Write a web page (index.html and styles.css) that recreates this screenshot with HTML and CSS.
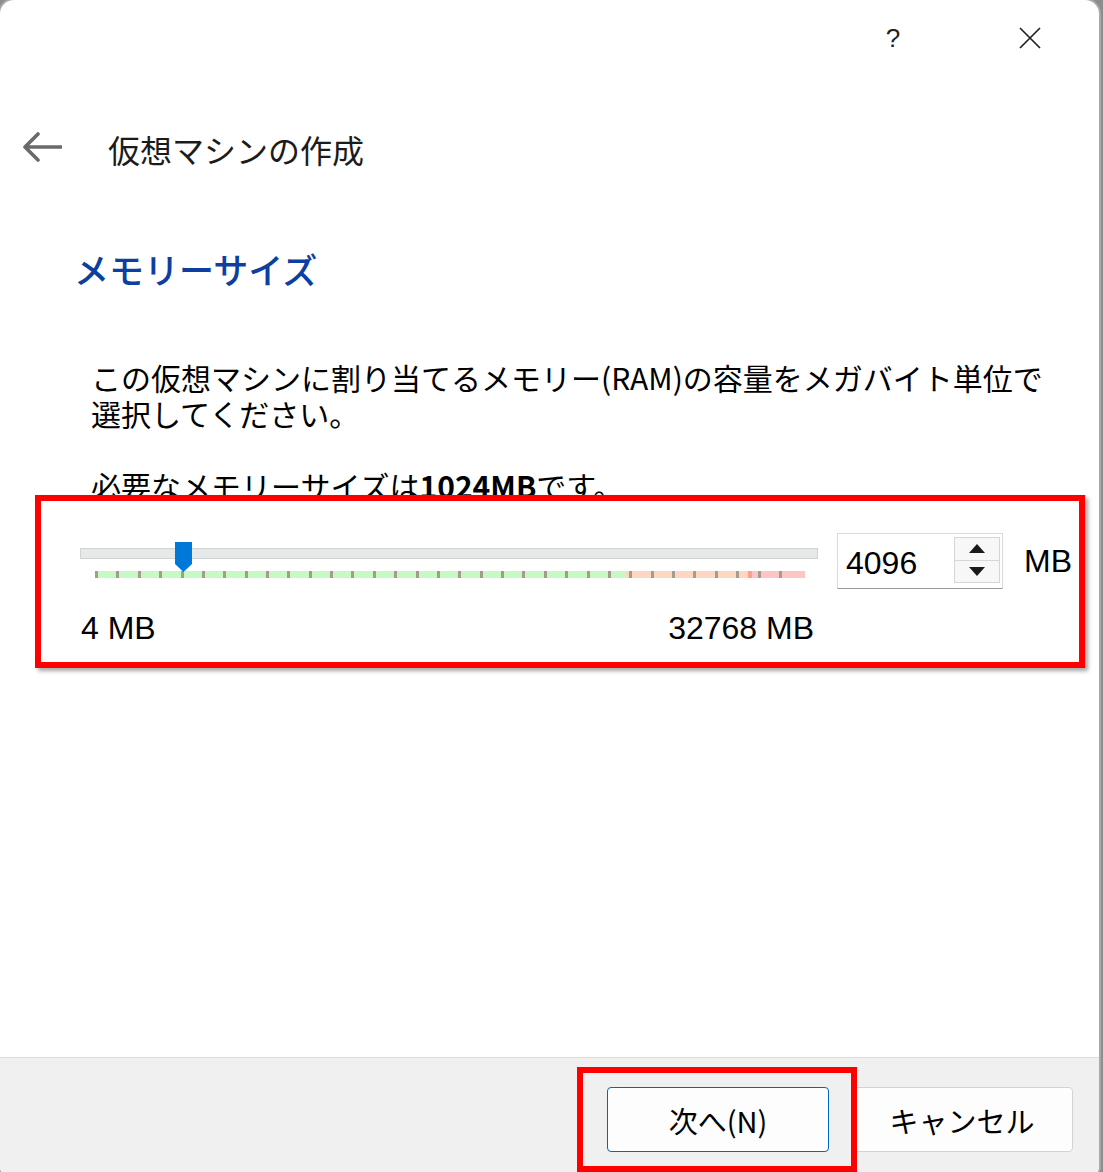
FILE: index.html
```html
<!DOCTYPE html>
<html lang="ja">
<head>
    <meta charset="UTF-8">
    <meta name="viewport" content="width=device-width, initial-scale=1.0">
    <title>仮想マシンの作成</title>
    <link rel="stylesheet" href="styles.css">
</head>
<body>
    <div class="dialog">
        <div class="titlebar">
            <span class="tb-btn help">?</span>
            <span class="tb-btn close">
                <svg width="22" height="22" viewBox="0 0 22 22"><path d="M1 1 L21 21 M21 1 L1 21" stroke="#222" stroke-width="1.7" fill="none"/></svg>
            </span>
        </div>

        <div class="header">
            <svg class="back" width="40" height="32" viewBox="0 0 40 32">
                <path d="M3 16 H39 M16 3 L3 16 L16 29" stroke="#6a6a6a" stroke-width="3.6" fill="none" stroke-linecap="round" stroke-linejoin="round"/>
            </svg>
            <span class="header-title">仮想マシンの作成</span>
        </div>

        <div class="content">
            <h2 class="page-title">メモリーサイズ</h2>
            <p class="desc">この仮想マシンに割り当てるメモリー(RAM)の容量をメガバイト単位で<br>選択してください。</p>
            <p class="note">必要なメモリーサイズは<b>1024MB</b>です。</p>

            <div class="highlight memory-box">
                <div class="memory-row">
                    <div class="slider">
                        <div class="track"></div>
                        <div class="thumb"></div>
                        <div class="scale"></div>
                        <div class="range-labels">
                            <span>4 MB</span>
                            <span>32768 MB</span>
                        </div>
                    </div>
                    <div class="spinbox">
                        <span class="spin-value">4096</span>
                        <div class="spin-buttons">
                            <span class="spin up"></span>
                            <span class="spin down"></span>
                        </div>
                    </div>
                    <span class="unit">MB</span>
                </div>
            </div>
        </div>

        <div class="footer">
            <button class="btn btn-default">次へ(N)</button>
            <button class="btn">キャンセル</button>
            <div class="highlight next-mark"></div>
        </div>
    </div>
</body>
</html>
```

FILE: styles.css
```css
body {
    margin: 0;
    background-color: #8d8d8d;
    font-family: "Noto Sans CJK JP", "Noto Sans", sans-serif;
    color: #000;
    overflow: hidden;
}
.dialog {
    width: 1099px;
    height: 1180px;
    background-color: #fff;
    border-radius: 14px;
    box-shadow: 0 0 0 2px #a9a9a9;
    display: flex;
    flex-direction: column;
    overflow: hidden;
}
.titlebar {
    height: 76px;
    display: flex;
    justify-content: flex-end;
    align-items: center;
    padding-right: 39px;
    gap: 77px;
}
.tb-btn {
    width: 60px;
    display: flex;
    justify-content: center;
    align-items: center;
    color: #222;
}
.help {
    font-family: "Liberation Sans", Arial, sans-serif;
    font-size: 26px;
    line-height: 30px;
}
.header {
    margin-top: 48px;
    height: 50px;
    display: flex;
    align-items: center;
    padding-left: 22px;
}
.back {
    margin-top: -4px;
}
.header-title {
    margin-left: 46px;
    font-size: 32px;
    line-height: 50px;
    color: #1b1b1b;
}
.content {
    flex: 1;
    padding-left: 35px;
}
.page-title {
    margin: 73px 0 0 39px;
    font-size: 35px;
    line-height: 44px;
    font-weight: 500;
    color: #0c3f9f;
}
.desc, .note {
    margin: 0 0 0 56px;
    font-size: 30px;
    line-height: 36px;
}
.desc {
    margin-top: 68px;
}
.note {
    margin-top: 36px;
    height: 28px;
    overflow: hidden;
}
.highlight {
    border: 6px solid #ff0000;
    box-sizing: border-box;
}
.memory-box {
    width: 1050px;
    height: 173px;
    padding: 32px 0 0 39px;
    background-color: #fff;
    box-shadow: 3px 3px 4px rgba(0, 0, 0, 0.35);
    position: relative;
}
.memory-row {
    display: flex;
    align-items: flex-start;
    font-family: "Liberation Sans", Arial, sans-serif;
    font-size: 32px;
}
.slider {
    position: relative;
    width: 738px;
    padding-top: 15px;
}
.track {
    height: 11px;
    background-color: #e6e9e9;
    border: 1px solid #d2d2d2;
    box-sizing: border-box;
}
.thumb {
    position: absolute;
    top: 9px;
    left: 95px;
    width: 17px;
    height: 30px;
    background-color: #0078d7;
    clip-path: polygon(0 0, 100% 0, 100% 73%, 50% 100%, 0 73%);
}
.scale {
    margin: 12px 0 0 15px;
    width: 710px;
    height: 7px;
    background:
        repeating-linear-gradient(to right, #a39d90 0 3px, transparent 3px 21.375px) 0 0 / 687px 100% no-repeat,
        linear-gradient(to right, #c5fac5 0 531px, #ffd6c2 531px 653px, #ff9f8f 653px 657px, #ffc5c5 657px);
}
.range-labels {
    margin-top: 32px;
    display: flex;
    justify-content: space-between;
    padding: 0 4px 0 1px;
    line-height: 36px;
}
.spinbox {
    margin-left: 19px;
    width: 166px;
    height: 56px;
    box-sizing: border-box;
    border: 1px solid #dadada;
    border-bottom-color: #9a9a9a;
    display: flex;
    align-items: center;
    padding-right: 2px;
}
.spin-value {
    flex: 1;
    padding: 3px 0 0 8px;
    line-height: 36px;
}
.spin-buttons {
    width: 46px;
    height: 46px;
    margin-top: -2px;
    border: 1px solid #d6d6d6;
    box-sizing: border-box;
    background-color: #f7f7f7;
    display: flex;
    flex-direction: column;
}
.spin {
    flex: 1;
    display: flex;
    justify-content: center;
    align-items: center;
}
.spin + .spin {
    border-top: 1px solid #d6d6d6;
}
.spin::before {
    content: "";
    border-left: 8px solid transparent;
    border-right: 8px solid transparent;
}
.up::before {
    border-bottom: 9px solid #1a1a1a;
}
.down::before {
    border-top: 9px solid #1a1a1a;
}
.unit {
    margin-left: 21px;
    height: 56px;
    line-height: 56px;
}
.footer {
    position: relative;
    height: 123px;
    box-sizing: border-box;
    border-top: 1px solid #dcdcdc;
    background-color: #f0f0f0;
    display: flex;
    justify-content: flex-end;
    align-items: flex-start;
    gap: 22px;
    padding: 29px 26px 0 0;
}
.btn {
    width: 222px;
    height: 65px;
    background-color: #fdfdfd;
    border: 1px solid #d3d3d3;
    border-radius: 4px;
    font-family: "Noto Sans CJK JP", sans-serif;
    font-size: 29px;
    color: #000;
    padding: 0;
}
.btn-default {
    border-color: #0067c0;
}
.next-mark {
    position: absolute;
    left: 577px;
    top: 9px;
    width: 280px;
    height: 105px;
}
```
